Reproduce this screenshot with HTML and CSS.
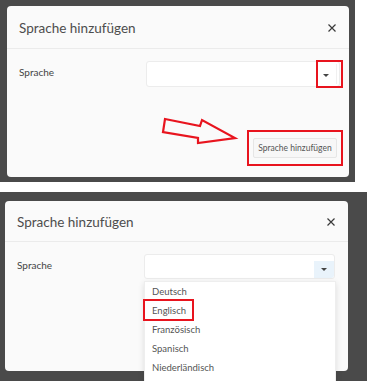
FILE: index.html
```html
<!DOCTYPE html>
<html lang="de">
<head>
<meta charset="UTF-8">
<meta name="viewport" content="width=device-width, initial-scale=1.0">
<title>Sprache hinzufügen</title>
<link rel="stylesheet" href="styles.css">
</head>
<body>

<div class="shot shot-top">
  <div class="modal modal-top">
    <div class="modal-header">
      <span class="modal-title">Sprache hinzufügen</span>
      <svg class="close" width="8" height="8" viewBox="0 0 8 8"><path d="M0.5 0.5 L7.5 7.5 M7.5 0.5 L0.5 7.5" stroke="#3a3a3a" stroke-width="1.2"/></svg>
    </div>
    <div class="modal-body">
      <label class="field-label">Sprache</label>
      <div class="select">
        <div class="select-arrow"><span class="caret"></span></div>
      </div>
    </div>
    <div class="modal-footer">
      <button type="button" class="btn">Sprache hinzufügen</button>
    </div>

    <!-- annotations -->
    <div class="mark mark-caret"></div>
    <div class="mark mark-button"></div>
    <svg class="arrow" width="342" height="171" viewBox="0 0 342 171">
      <polygon points="158,113 193,120 195,114 228,132 191,137 191,132 156,126" fill="none" stroke="#e8141e" stroke-width="2.2" stroke-linejoin="miter"/>
    </svg>
  </div>
</div>

<div class="shot shot-bottom">
  <div class="modal modal-bottom">
    <div class="modal-header">
      <span class="modal-title">Sprache hinzufügen</span>
      <svg class="close" width="8" height="8" viewBox="0 0 8 8"><path d="M0.5 0.5 L7.5 7.5 M7.5 0.5 L0.5 7.5" stroke="#3a3a3a" stroke-width="1.2"/></svg>
    </div>
    <div class="modal-body">
      <label class="field-label">Sprache</label>
      <div class="select open">
        <div class="select-arrow hover"><span class="caret"></span></div>
        <ul class="options">
          <li>Deutsch</li>
          <li>Englisch</li>
          <li>Französisch</li>
          <li>Spanisch</li>
          <li>Niederländisch</li>
        </ul>
        <div class="mark mark-option"></div>
      </div>
    </div>
  </div>
</div>

</body>
</html>
```

FILE: styles.css
```css
body {
  margin: 0;
  background: #ffffff;
  font-family: "Lato", "Open Sans", sans-serif;
  color: #555555;
}
.shot {
  background-color: #4a4a4a;
  overflow: hidden;
  box-sizing: border-box;
}
.shot-top {
  width: 355px;
  height: 182px;
  padding: 6px 0 0 7px;
  margin-bottom: 10px;
}
.shot-bottom {
  width: 367px;
  height: 189px;
  padding: 9px 0 0 5px;
}
.modal {
  position: relative;
  background: #fafafa;
  border-radius: 4px;
  box-sizing: border-box;
}
.modal-top {
  width: 342px;
  height: 171px;
}
.modal-bottom {
  width: 343px;
  height: 170px;
}
.modal-header {
  display: flex;
  align-items: center;
  justify-content: space-between;
  height: 42px;
  padding: 0 12px;
  border-bottom: 1px solid #ebebeb;
}
.modal-bottom .modal-header {
  height: 40px;
}
.modal-title {
  font-size: 13.5px;
  color: #4d4d4d;
  padding-top: 2px;
}
.close {
  margin-right: 1px;
  margin-top: 1px;
}
.modal-body {
  display: flex;
  align-items: flex-start;
  padding: 12px 9px 0 12px;
}
.modal-bottom .modal-body {
  padding-top: 12px;
  padding-right: 13px;
}
.field-label {
  width: 127px;
  font-size: 10px;
  color: #444444;
  padding-top: 5px;
}
.select {
  position: relative;
  flex: 1;
  height: 24px;
  background: #ffffff;
  border: 1px solid #ececec;
  border-radius: 3px;
  display: flex;
  justify-content: flex-end;
}
.modal-bottom .select {
  height: 23px;
}
.select-arrow {
  width: 20px;
  margin: 2px 2px 2px 0;
  display: flex;
  align-items: center;
  justify-content: center;
  border-right: 1px solid #f0f0f0;
}
.select-arrow.hover {
  background: #e9f3fb;
  border-right: none;
  margin: 6px 0 0 0;
  border-radius: 0 0 3px 0;
}
.caret {
  width: 0;
  height: 0;
  border-left: 3px solid transparent;
  border-right: 3px solid transparent;
  border-top: 3px solid #444444;
  margin-top: 3px;
}
.select-arrow.hover .caret {
  margin-top: 0;
}
.options {
  position: absolute;
  top: 26px;
  left: -1px;
  width: 190px;
  margin: 0;
  padding: 0 0 12px 0;
  list-style: none;
  background: #ffffff;
  border: 1px solid #eeeeee;
  box-shadow: 0 2px 6px rgba(0, 0, 0, 0.12);
  z-index: 2;
}
.options li {
  height: 19px;
  line-height: 19px;
  padding-left: 7px;
  font-size: 9.5px;
  color: #555555;
}
.modal-footer {
  display: flex;
  justify-content: flex-end;
  padding: 51px 12px 0 0;
}
.btn {
  font-family: inherit;
  font-size: 8.5px;
  color: #555555;
  background: #f7f7f7;
  border: 1px solid #e6e6e6;
  border-radius: 2px;
  height: 20px;
  width: 84px;
  padding: 0;
}
.mark {
  position: absolute;
  border: 2px solid #e8141e;
  box-sizing: border-box;
  z-index: 3;
}
.mark-caret {
  left: 309px;
  top: 54px;
  width: 27px;
  height: 28px;
}
.mark-button {
  left: 240px;
  top: 124px;
  width: 96px;
  height: 36px;
}
.mark-option {
  left: -2px;
  top: 44px;
  width: 51px;
  height: 22px;
}
.arrow {
  position: absolute;
  left: 0;
  top: 0;
  pointer-events: none;
}
```
